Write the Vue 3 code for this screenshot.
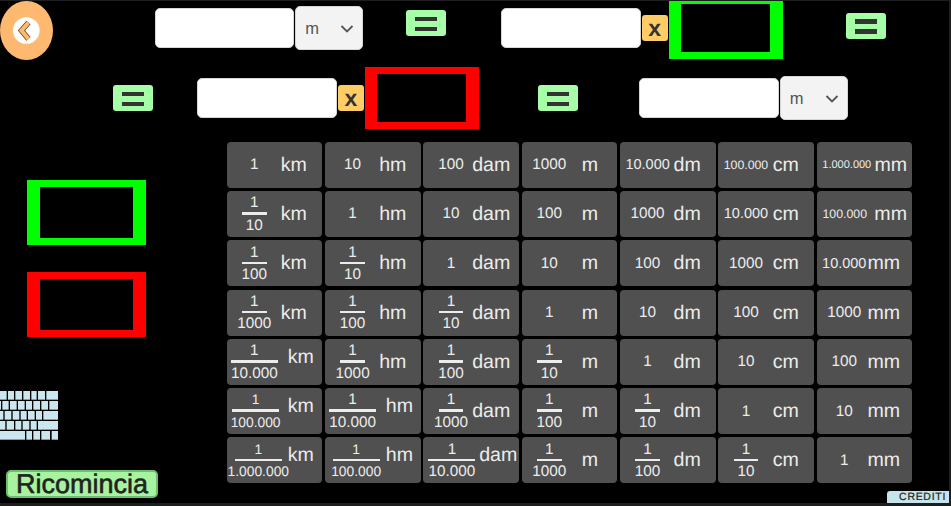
<script setup>
const unitLeft = { km: 54, hm: 54, dam: 48.7, m: 60, dm: 53.5, cm: 54.3, mm: 50.7 }
const units = ['km', 'hm', 'dam', 'm', 'dm', 'cm', 'mm']

// c: centre of the value, l: left of the unit, s: font size, up: unit sits higher
const rows = [
  [{ v: '1' }, { v: '10' }, { v: '100' }, { v: '1000' }, { v: '10.000', s: 14.5 }, { v: '100.000', s: 12.3 }, { v: '1.000.000', s: 11, c: 30, l: 57.6 }],
  [{ d: '10' }, { v: '1' }, { v: '10' }, { v: '100' }, { v: '1000' }, { v: '10.000', s: 14.5 }, { v: '100.000', s: 12.3, c: 28, l: 57.6 }],
  [{ d: '100' }, { d: '10' }, { v: '1' }, { v: '10' }, { v: '100' }, { v: '1000' }, { v: '10.000', s: 14.5 }],
  [{ d: '1000' }, { d: '100' }, { d: '10' }, { v: '1' }, { v: '10' }, { v: '100' }, { v: '1000' }],
  [{ d: '10.000', l: 61, up: true }, { d: '1000' }, { d: '100' }, { d: '10' }, { v: '1' }, { v: '10' }, { v: '100' }],
  [{ d: '100.000', s: 13.8, c: 28.8, l: 61, up: true, wide: true }, { d: '10.000', l: 60.7, up: true }, { d: '1000' }, { d: '100' }, { d: '10' }, { v: '1' }, { v: '10' }],
  [{ d: '1.000.000', s: 13.8, c: 31.5, l: 61, up: true, wide: true }, { d: '100.000', s: 13.8, c: 31, l: 60.7, up: true, wide: true }, { d: '10.000', c: 28.5, l: 55.7, up: true }, { d: '1000' }, { d: '100' }, { d: '10' }, { v: '1' }]
]

const cells = rows.flatMap((row, r) =>
  row.map((cell, i) => {
    const unit = units[i]
    const centre = cell.c ?? 27.5
    const left = cell.l ?? unitLeft[unit]
    return {
      id: r + '-' + i,
      unit,
      ...cell,
      long: cell.wide || (cell.d && cell.d.includes('.')),
      valueStyle: { width: centre * 2 + 'px', fontSize: (cell.s ?? 15.3) + 'px' },
      unitStyle: { marginLeft: left - centre * 2 + 'px' }
    }
  })
)

// key edges for each keyboard row, in a 174 wide drawing
const keyRows = [
  [[0, 20], [24, 42], [46, 66], [70, 90], [94, 110], [114, 135], [139, 174]],
  [[0, 3], [7, 26], [30, 50], [54, 74], [78, 96], [100, 120], [124, 144], [148, 174]],
  [[0, 10], [14, 34], [38, 58], [62, 80], [84, 104], [108, 126], [130, 174]],
  [[0, 16], [20, 42], [46, 64], [68, 88], [92, 110], [114, 174]],
  [[0, 75], [79, 96], [100, 120], [124, 150], [155, 174]]
]
const keys = keyRows.flatMap((row, r) =>
  row.map(([a, b]) => ({ x: a, w: b - a, y: r * 30, id: r + '-' + a }))
)
</script>

<template>
  <div class="page">
    <div class="stage">
      <div class="row row-one">
        <button class="back" aria-label="Indietro">
          <svg width="53" height="60" viewBox="0 0 53 60">
            <ellipse cx="26.5" cy="29.5" rx="26.5" ry="29.5" fill="#fdb96f" />
            <circle cx="26.3" cy="29.5" r="13.3" fill="#fff" />
            <path d="M28.5 21.5 L21.5 29.5 L28.5 38" fill="none" stroke="#6b4a22" stroke-width="5.6" />
            <path d="M28.5 21.5 L21.5 29.5 L28.5 38" fill="none" stroke="#fdb96f" stroke-width="4" />
          </svg>
        </button>
        <div class="pair pair-a">
          <input class="field" type="text" />
          <div class="picker">
            <select><option>m</option></select>
            <svg class="chevron" width="14" height="8" viewBox="0 0 14 8"><path d="M1.5 1 L7 6.5 L12.5 1" fill="none" stroke="#555" stroke-width="1.8" /></svg>
          </div>
        </div>
        <button class="equal eq-a" aria-label="Uguale"></button>
        <div class="pair pair-b">
          <input class="field" type="text" />
          <button class="times">x</button>
        </div>
        <div class="box box-top-green"></div>
        <button class="equal eq-b" aria-label="Uguale"></button>
      </div>

      <div class="row row-two">
        <button class="equal eq-c" aria-label="Uguale"></button>
        <div class="pair pair-c">
          <input class="field" type="text" />
          <button class="times">x</button>
        </div>
        <div class="box box-top-red"></div>
        <button class="equal eq-d" aria-label="Uguale"></button>
        <div class="pair pair-d">
          <input class="field" type="text" />
          <div class="picker">
            <select><option>m</option></select>
            <svg class="chevron" width="14" height="8" viewBox="0 0 14 8"><path d="M1.5 1 L7 6.5 L12.5 1" fill="none" stroke="#555" stroke-width="1.8" /></svg>
          </div>
        </div>
      </div>

      <div class="main">
        <aside class="side">
          <div class="box box-side-green"></div>
          <div class="box box-side-red"></div>
          <svg class="keyboard" width="58" height="49" viewBox="0 0 174 147">
            <rect v-for="k in keys" :key="k.id" :x="k.x" :y="k.y" :width="k.w" height="26" fill="#cbe6ee" />
          </svg>
          <button class="restart">Ricomincia</button>
        </aside>

        <div class="table">
          <button v-for="c in cells" :key="c.id" class="cell">
            <span class="value" :style="c.valueStyle">
              <template v-if="c.v">{{ c.v }}</template>
              <span v-else class="fraction">
                <span class="num">1</span>
                <span class="bar" :class="{ long: c.long }"></span>
                <span class="den">{{ c.d }}</span>
              </span>
            </span>
            <span class="unit" :class="{ up: c.up }" :style="c.unitStyle">{{ c.unit }}</span>
          </button>
        </div>
      </div>

      <button class="credits">CREDITI</button>
    </div>
  </div>
</template>

<style>
html, body {
  margin: 0;
  background: #1e1e1e;
}
</style>

<style scoped>
.page {
  width: 951px;
  height: 506px;
  padding-top: 1px;
  box-sizing: border-box;
  background: #1e1e1e;
  overflow: hidden;
  font-family: "Liberation Sans", Arial, sans-serif;
  text-rendering: geometricPrecision;
}

.stage {
  position: relative;
  width: 949px;
  height: 502px;
  background: #000;
}

button {
  padding: 0;
  border: 0;
  font-family: inherit;
  text-rendering: geometricPrecision;
}

.row {
  display: flex;
  align-items: flex-start;
}

.row-one {
  height: 66px;
}

.row-two {
  height: 74.7px;
}

.back {
  width: 53px;
  height: 60px;
  background: none;
  flex: none;
}

.back svg {
  display: block;
}

.pair {
  display: flex;
  align-items: center;
  gap: 1px;
  flex: none;
}

.pair-a {
  margin: 5px 0 0 101.7px;
}

.pair-b {
  margin: 7px 0 0 55px;
}

.pair-c {
  margin: 11px 0 0 44.6px;
}

.pair-d {
  margin: 9px 0 0 61px;
}

.field {
  width: 139.5px;
  height: 39.5px;
  box-sizing: border-box;
  border: 1px solid #d6d6d6;
  border-radius: 5px;
  background: #fff;
  padding: 0 8px;
}

.picker {
  position: relative;
  width: 68px;
  height: 44px;
}

.picker select {
  appearance: none;
  width: 100%;
  height: 100%;
  box-sizing: border-box;
  border: 1px solid #d6d6d6;
  border-radius: 5px;
  background: #f3f3f3;
  color: #555;
  font-family: inherit;
  font-size: 16.5px;
  padding: 0 0 0 9px;
}

.chevron {
  position: absolute;
  top: 19px;
  right: 9px;
  pointer-events: none;
}

.equal {
  position: relative;
  width: 40px;
  height: 26px;
  border-radius: 3px;
  background: #a6ffa6;
  flex: none;
}

.equal::before,
.equal::after {
  content: "";
  position: absolute;
  left: 9px;
  width: 22px;
  height: 4.5px;
  background: #333;
}

.equal::before {
  top: 6.7px;
}

.equal::after {
  top: 16.7px;
}

.eq-a {
  margin: 9px 0 0 43px;
}

.eq-b {
  margin: 11.7px 0 0 63px;
}

.eq-c {
  margin: 18px 0 0 112.7px;
}

.eq-d {
  margin: 18px 0 0 59px;
}

.times {
  width: 26px;
  height: 26px;
  border-radius: 3px;
  background: #ffcc66;
  color: #333;
  font-size: 23px;
  font-weight: 700;
  line-height: 24px;
  flex: none;
}

.box {
  box-sizing: border-box;
  border-style: solid;
  flex: none;
}

.box-top-green {
  width: 114px;
  height: 58px;
  margin-left: 1.5px;
  border-color: #0f0;
  border-width: 3px 13px 7px 12px;
}

.box-top-red {
  width: 114.5px;
  height: 62px;
  margin-left: 1px;
  border-color: #f00;
  border-width: 7px 13px 7px 12px;
}

.main {
  display: flex;
  align-items: flex-start;
}

.side {
  display: flex;
  flex-direction: column;
  align-items: flex-start;
  width: 226.8px;
  flex: none;
}

.box-side-green,
.box-side-red {
  width: 119px;
  height: 65px;
  margin-left: 27px;
  border-width: 7px 13px;
}

.box-side-green {
  margin-top: 38.3px;
  border-color: #0f0;
}

.box-side-red {
  margin-top: 27px;
  border-color: #f00;
}

.keyboard {
  display: block;
  margin-top: 54px;
}

.restart {
  width: 152px;
  height: 28px;
  margin: 30px 0 0 6px;
  box-sizing: border-box;
  border: 2px solid #6dbf6d;
  border-radius: 5px;
  background: #a8f3a0;
  color: #222;
  font-size: 27px;
  line-height: 24px;
  -webkit-text-stroke: 0.6px #222;
}

.table {
  display: grid;
  grid-template-columns: repeat(7, 95.7px);
  grid-auto-rows: 46px;
  column-gap: 2.65px;
  row-gap: 3.3px;
}

.cell {
  display: flex;
  align-items: center;
  border-radius: 4px;
  background: #505050;
  color: #ececec;
  text-align: left;
  overflow: hidden;
}

.value {
  flex: none;
  display: flex;
  justify-content: center;
  white-space: nowrap;
  line-height: 18px;
  margin-top: 1px;
}

.fraction {
  display: flex;
  flex-direction: column;
  align-items: center;
  margin-top: -1px;
}

.num,
.den {
  height: 19px;
  line-height: 19px;
}

.den {
  margin-top: 1px;
}

.bar {
  width: 24.5px;
  height: 2.5px;
  background: #ececec;
}

.bar.long {
  width: 47px;
}

.unit {
  font-size: 19.6px;
  line-height: 22px;
}

.unit.up {
  margin-top: -10px;
}

.credits {
  position: absolute;
  right: 0;
  bottom: 0;
  width: 62px;
  height: 12.5px;
  border-top-left-radius: 3px;
  background: #c5e4ec;
  color: #222;
  font-size: 10.5px;
  line-height: 13px;
  letter-spacing: 0.7px;
  text-align: right;
  padding-right: 3px;
  box-sizing: border-box;
  -webkit-text-stroke: 0.2px #222;
}
</style>
